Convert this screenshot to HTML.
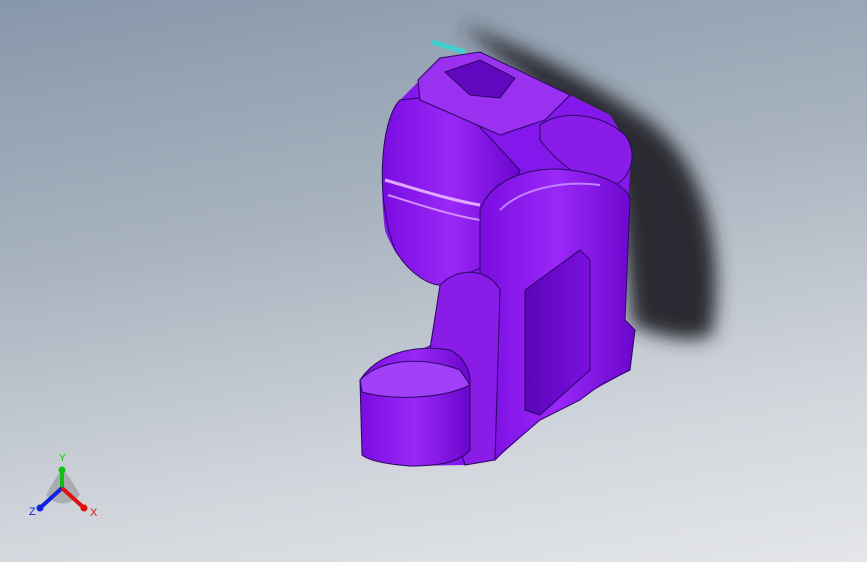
<!DOCTYPE html>
<html><head><meta charset="utf-8"><style>
html,body{margin:0;padding:0;width:867px;height:562px;overflow:hidden}
body{background:linear-gradient(170deg,#8797aa 0%,#aab4c0 40%,#d2d6dc 75%,#e4e6e9 100%)}
</style></head><body>
<svg width="867" height="562" viewBox="0 0 867 562" xmlns="http://www.w3.org/2000/svg" style="position:absolute;left:0;top:0">
<defs>
<filter id="bl" x="-20%" y="-20%" width="140%" height="140%"><feGaussianBlur stdDeviation="9"/></filter>
<linearGradient id="pg" x1="0" y1="0" x2="1" y2="0"><stop offset="0" stop-color="#7a0ce0"/><stop offset=".5" stop-color="#9a28f8"/><stop offset="1" stop-color="#6a06cc"/></linearGradient>
<linearGradient id="dk" x1="0" y1="0" x2="1" y2="0"><stop offset="0" stop-color="#5a04b8"/><stop offset="1" stop-color="#7a10e0"/></linearGradient>
</defs>
<path d="M460 25 C520 45 590 80 640 115 C710 160 725 260 712 335 C690 345 655 335 632 325 L620 200 L575 120 Z" fill="#2a2c30" filter="url(#bl)"/>
<!-- backing fill -->
<path d="M400 100 L420 80 L480 52 L570 95 L610 115 L632 150 L628 200 L625 320 L635 330 L630 370 L540 420 L495 460 L465 465 L410 466 L362 455 L360 380 L430 345 L440 285 C420 280 395 260 385 230 C378 180 385 120 400 100 Z" fill="#8418ec"/>
<path d="M400 100 C380 120 375 200 395 250 C410 275 430 285 440 285 L500 260 L520 170 L450 95 Z" fill="url(#pg)" stroke="#2a0860" stroke-width="1"/>
<path d="M385 180 C420 190 450 200 480 205" stroke="#e0a8ff" stroke-width="3" fill="none"/>
<path d="M388 195 C420 205 450 215 480 220" stroke="#d090ff" stroke-width="2" fill="none"/>
<path d="M418 80 L440 58 L480 52 L570 95 L545 120 L500 135 L420 100 Z" fill="#9a30f0" stroke="#2a0860" stroke-width="1"/>
<path d="M445 72 L480 60 L515 78 L500 98 L470 95 Z" fill="#6008c0" stroke="#2a0860"/>
<path d="M432 42 L465 52" stroke="#40d0d0" stroke-width="5"/>
<path d="M540 125 C560 110 600 112 625 135 C640 155 630 185 605 188 C580 180 555 160 540 140 Z" fill="#8a1ce8" stroke="#2a0860"/>
<path d="M480 210 C490 180 530 165 570 170 C610 175 630 190 630 200 L625 320 L635 330 L630 370 L600 385 L580 400 L540 420 L505 450 L495 460 L490 380 L480 300 Z" fill="url(#pg)" stroke="#2a0860"/>
<path d="M500 210 C520 190 560 180 600 185" stroke="#c080ff" stroke-width="2" fill="none"/>
<path d="M525 290 L580 250 L590 260 L590 370 L540 415 L525 410 Z" fill="url(#dk)" stroke="#2a0860"/>
<path d="M440 285 C460 265 490 270 500 290 L495 460 L465 465 L430 350 Z" fill="#8a1ce8" stroke="#2a0860"/>
<path d="M360 380 C380 350 420 345 450 350 C470 360 470 380 470 380 L470 450 C460 462 440 466 410 466 C385 464 368 460 362 455 Z" fill="url(#pg)" stroke="#2a0860"/>
<path d="M360 380 C380 360 420 355 460 370 L470 385 C440 400 390 400 362 392 Z" fill="#a040f8" stroke="#2a0860"/>
<path d="M46 495 Q60 470 62 470 Q66 470 80 495 Q62 512 46 495 Z" fill="#888" opacity=".5"/>
<line x1="62" y1="488" x2="62" y2="470" stroke="#10c010" stroke-width="4"/>
<circle cx="62" cy="470" r="3.5" fill="#10c010"/>
<line x1="62" y1="488" x2="40" y2="508" stroke="#1020e0" stroke-width="4"/>
<circle cx="40" cy="508" r="3.5" fill="#1020e0"/>
<line x1="62" y1="488" x2="84" y2="508" stroke="#e01010" stroke-width="4"/>
<circle cx="84" cy="508" r="3.5" fill="#e01010"/>
<text x="59" y="461" font-family="Liberation Sans" font-size="10" fill="#10c010">Y</text>
<text x="29" y="515" font-family="Liberation Sans" font-size="11" fill="#1020e0">Z</text>
<text x="90" y="516" font-family="Liberation Sans" font-size="11" fill="#e01010">X</text>
</svg>
</body></html>
